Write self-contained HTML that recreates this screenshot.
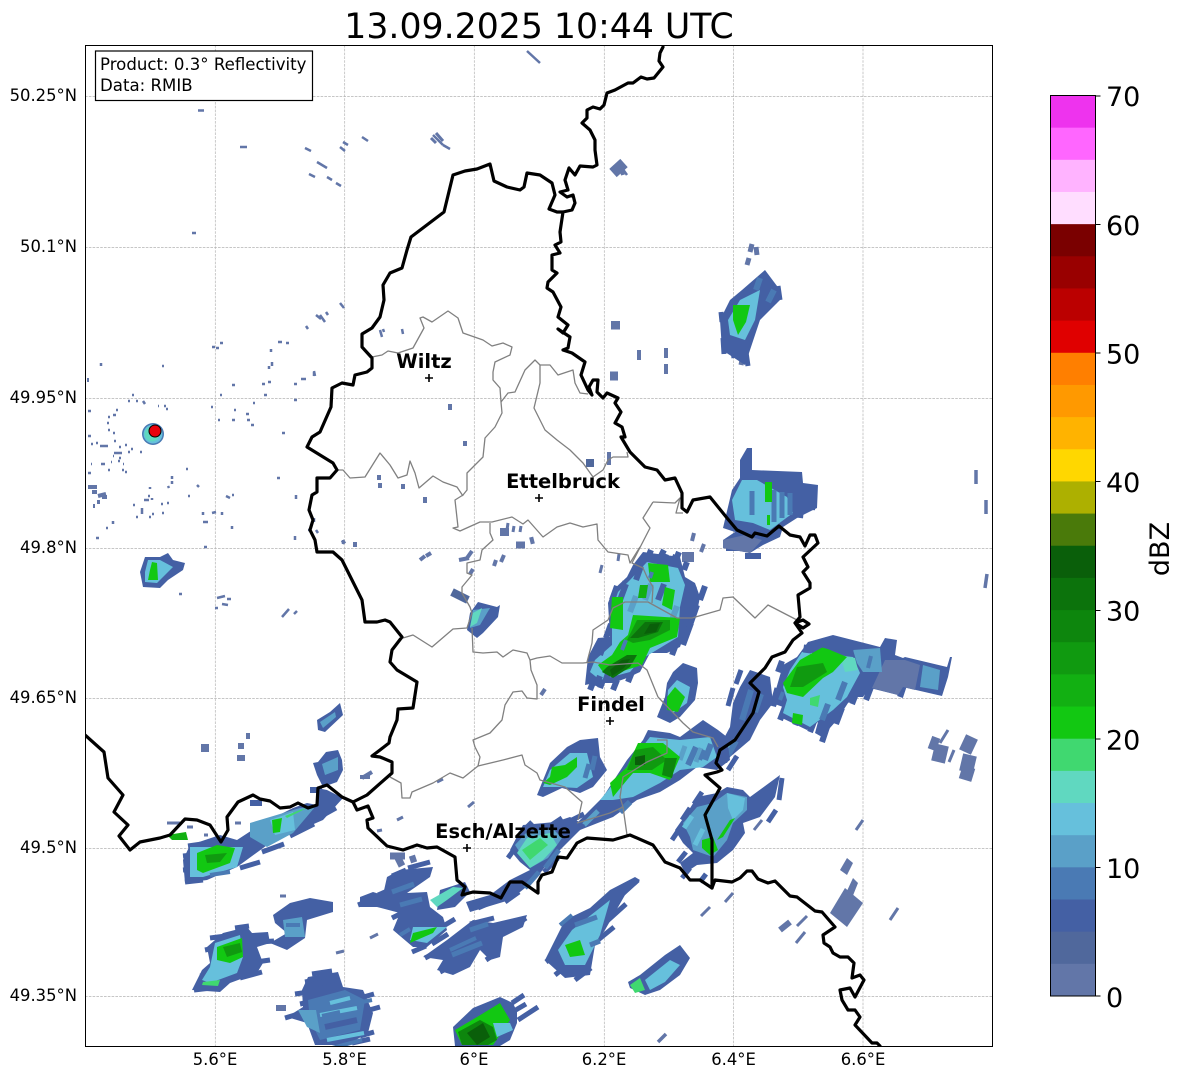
<!DOCTYPE html>
<html><head><meta charset="utf-8"><title>Radar</title>
<style>
html,body{margin:0;padding:0;background:#fff}
svg{display:block}
text{font-family:"DejaVu Sans",sans-serif;fill:#000}
.tk{font-size:16.4px}
.cb{font-size:27px}
.ct{font-size:19.5px;font-weight:bold;text-anchor:middle}
.c1{fill:#6276a8}.c2{fill:#50689c}.c3{fill:#4460a4}.c4{fill:#4a7ab4}.c5{fill:#5aa0c8}.c6{fill:#66c0dc}.c7{fill:#60d8c0}.c8{fill:#40d870}
.g1{fill:#12c812}.g2{fill:#12b012}.g3{fill:#109a10}.g4{fill:#0d860d}.g5{fill:#0c730c}.g6{fill:#0a5f0a}
.s1,.s2,.s3,.s4,.s5,.s6,.s7,.s8,.sg{fill:none}
.s1{stroke:#6276a8}.s2{stroke:#50689c}.s3{stroke:#4460a4}.s4{stroke:#4a7ab4}.s5{stroke:#5aa0c8}.s6{stroke:#66c0dc}.s7{stroke:#60d8c0}.s8{stroke:#40d870}.sg{stroke:#12c812}
</style></head><body>
<svg width="1184" height="1081" viewBox="0 0 1184 1081" xmlns="http://www.w3.org/2000/svg">
<defs><clipPath id="ax"><rect x="85" y="45" width="907" height="1001"/></clipPath></defs>
<rect width="1184" height="1081" fill="#fff"/>
<text x="539" y="38" text-anchor="middle" style="font-size:34.7px">13.09.2025 10:44 UTC</text>

<g stroke="#b4b4b4" stroke-width="0.7" stroke-dasharray="2.6 1.2" fill="none">
<path d="M215.3 45V1046M344.7 45V1046M474.3 45V1046M604.3 45V1046M733.6 45V1046M863 45V1046"/>
<path d="M85 96.5H992M85 247.5H992M85 398.5H992M85 548.5H992M85 698.5H992M85 848.5H992M85 996.5H992"/>
</g>

<g clip-path="url(#ax)">
<!-- small echoes -->
<g class="s1" stroke-width="2.500">
<path d="M198 110.500h6M240 147h7M305 148l6 3M317 162l10 6M309 174l6 3M327 177l5 3M336 183l5 3M340 147l5 4M343 142l5 3M362 137l6 4M192 233h4M433 135l10 10M380 330l2 7M383 329l1 3M402 329l1 5M340 303l4 5M316 315l5 4M320 315l5 7M326 312l2 3M306 326l2 3M314 371l1 5"/>
<path d="M527 51l13 12M443 145l7 4M622 168l5 7" stroke-width="2.500"/>
<path d="M436 133l7 8M431 138l5 5" stroke-width="3"/>
<path d="M212 347h3M216 348h3M220 343h3M271 349v3M272 362v4M269 366v3M278 342h4M286 343h3M101 363v3M162 366h2M314 372v4M301 379h5M294 384h3M268 382h3M262 384h3M232 385h3M132 395h2M128 401h2M136 401h2M143 401l2 3M220 395h2M264 395h3M294 400h3M253 403h2M211 407h2M158 406h1M164 406h2M166 409h2M234 410h2M246 414h3M247 420h3M251 425h3M232 420h3M218 420h2M116 410h2M113 415h3M108 417h2M107 423h2M88 411h3M282 433h3M88 436h3M108 430h2M113 433h2M119 447h2M125 445h2M131 449h2M128 452h2M114 441h2M96 443h2M91 444h2M100 446h8M114 453h8M119 458h2M118 461h2M113 456h1M140 452h2M91 464h1M101 464h2M103 464h2M111 462h1M108 470h2M123 464h1M122 470h2M125 472h2M88 473h3M186 469h2M172 476v3M172 481v3M168 486l1 2M197 485l2 2M277 478h3M296 495v4M188 496h2M232 495h2M226 496l4 2M150 487v2M144 500h5M148 496h2M152 498v2M133 505h2M142 508v6M152 514h2M149 517h2M136 517h2M162 513h2M161 504h2M167 503h2M203 512v3M212 513l4 -1M222 512v3M203 522h5M113 521v3M106 528h2M96 538h3M232 526v3M314 518v4M316 530l2 3M308 530h3M295 536v4M204 547h3M343 540v4M179 594h3M217 598l8 -2M227 599h4M222 604l6 1M215 608h3M282 617l7 -8M294 614l3 -3"/>
<path d="M88 487h9M92 492h5M98 496l8 -2M102 497h5M97 502h3M93 506h2M87 380h2" stroke-width="4"/>
</g>
<g class="s1" stroke-width="3">
<path d="M450 404v6M465 441v5M639 350v10M666 348v10M666 364v10M611 323h9" stroke-width="4"/>
<path d="M611 327h9" stroke-width="5"/>
<path d="M610 376h8" stroke-width="9"/>
<path d="M586 463h8" stroke-width="8" class="s2"/>
<path d="M609 452v13" stroke-width="4"/>
<path d="M379 475v5M380 483v5M403 484v5M425 497v6M342 543l3 -2M355 542v5M420 560l5 -4M426 556l5 -3"  stroke-width="4"/>
<path d="M459 560l10 -2M467 558l5 -7M470 574l3 -5M494 566l2 -6M501 562l3 -7" stroke-width="4"/>
<path d="M500 532h9" stroke-width="8"/>
<path d="M507 530l1 -7M513 532l1 -6M520 532l1 -6" stroke-width="3"/>
<path d="M516 545h9M530 541l4 -1" stroke-width="7"/>
<path d="M600 573l2 -8M618 561l1 -7M622 587l2 -6" stroke-width="3"/>
<path d="M452 592l16 8" stroke-width="8" class="s2"/>
<path d="M692 541l2 -8M701 552l3 -8" stroke-width="4"/>
<path d="M682 557l12 0" stroke-width="10"/>
<path d="M976 484v-14M986 514v-14M985 588l2 -14" stroke-width="3.500"/>
<path d="M856 830l7 -10M754 830l8 -10M725 902l8 -9M701 916l9 -9M890 920l8 -12" stroke-width="3"/>
<path d="M780 930l10 -8" stroke-width="6"/>
<path d="M797 926l10 -10M796 943l9 -11" stroke-width="3"/>
<path d="M201 748h8" stroke-width="8"/>
<path d="M238 746h6M237 758l8 0M246 736l4 0" stroke-width="6"/>
<path d="M541 695l4 -6M362 778l10 -6M360 777h10" stroke-width="4"/>
<path d="M397 820l6 -3M468 807l6 -5M437 782l6 -3M377 831l5 -1" stroke-width="3"/>
<path d="M390 856h15M398 858l4 8M410 860l6 -2" stroke-width="7"/>
<path d="M280 896h6M370 938l8 -4M336 953l8 -2" stroke-width="3"/>
<path d="M276 1008h10" stroke-width="6"/>
<path d="M658 1042l8 -8" stroke-width="3.500"/>
<path d="M750 252l2 -8M757 255l-1 -8M747 265l2 -7M741 365l1 -5" stroke-width="5"/>
<path d="M613 173l11 -10" stroke-width="11"/>
<path d="M623 175l-2 -7" stroke-width="4"/>
<path d="M938 762l4 -17M966 772l4 -17" stroke-width="14"/>
<path d="M930 742l8 3M972 737l-7 15M965 780l4 -13" stroke-width="13"/>
<path d="M948 730l-8 13M954 750l-5 12" stroke-width="3"/>
</g>

<!-- jagged under-edges -->
<path class="s3" stroke-width="6" d="M640 572l5 -14M650 566l3 -12M662 566l4 -12M672 566l4 -11M684 570l3 -8M692 612l6 -18M700 600l5 -14M606 638l5 -14M612 600l5 -14M596 662l4 -12M590 690l4 -10M600 688l3 -8M613 690l4 -10M628 682l4 -10M672 655l6 -16M684 636l4 -12"/>
<path class="s3" stroke-width="6" d="M795 725l5 -13M810 732l5 -13M822 742l6 -18M836 724l6 -16M852 704l5 -13M866 700l5 -13M900 697l4 -12M780 720l5 -13M773 706l5 -13M778 672l4 -11"/>
<path class="s3" stroke-width="5" d="M728 770l9 -14M722 756l8 -14M732 742l10 -14M744 726l8 -14M772 706l5 -18M728 706l5 -18M736 684l5 -14"/>
<path class="s3" stroke-width="5" d="M700 882l6 -8M682 878l8 -10M678 862l8 -10M672 840l8 -12M682 820l8 -12M694 804l8 -12M768 822l8 -12M779 800l3 -22M752 814l14 -12"/>
<path class="s3" stroke-width="5" d="M530 866l-10 -8M508 858l10 -14M520 834l12 -12M550 826l12 -8M572 820l12 -6M544 872l14 -14M505 902l14 -10M478 908l14 -6"/>
<path class="s3" stroke-width="5" d="M185 882l18 -2M183 870l14 -1M183 856l10 -1M188 846l14 -2M240 868l20 -6M262 852l22 -8M290 836l24 -12M318 818l18 -10"/>
<path class="s3" stroke-width="5" d="M194 990l26 -3M200 976l10 -1M262 972l-22 6M270 960l-14 2M205 950l10 -2M260 942l14 -1M210 938l16 -2M235 928l14 -2"/>
<path class="s3" stroke-width="5" d="M285 1018l20 -6M300 1004l14 -3M295 994l14 -2M305 982l22 -4M312 974l20 -3M360 998l14 -4M362 1012l18 -5M360 1036l14 -4M352 1043l18 -4"/>
<path class="s3" stroke-width="5" d="M512 1003l12 -8M514 1011l12 -7M518 1020l20 -13"/>
<path class="s3" stroke-width="5" d="M358 905l16 -6M378 895l14 -6M392 876l14 -6M408 868l22 -6M398 930l10 -6M392 918l12 -6M412 952l14 -6M432 944l16 -10M445 925l10 -6"/>
<path class="s3" stroke-width="5" d="M425 958l20 -10M440 972l22 -12M470 924l24 -6M502 934l24 -16M486 960l12 -8"/>
<path class="s3" stroke-width="5" d="M546 962l10 -8M555 975l10 -8M575 980l16 -12M592 945l22 -18M606 922l20 -18M618 898l20 -18"/>
<path class="s3" stroke-width="5" d="M724 354l-1 -16M734 358l-2 -14M748 366l-2 -14M774 304l-3 -22M780 300l-2 -14M722 322l-1 -10"/>
<path class="s3" stroke-width="6" d="M735 528l2 -24M744 500l2 -24M726 548l16 0M745 556l16 0M800 518l2 -18M812 510l2 -20"/>

<!-- radar-site echo -->
<circle cx="153" cy="434" r="11" fill="#4a7ab4"/>
<circle cx="153" cy="434" r="9.500" fill="#66c0dc"/>
<circle cx="152" cy="434" r="7.500" fill="#60d8c0"/>

<!-- S12 -->
<polygon class="c3" points="145,557 160,557 168,553 173,560 185,563 183,570 168,580 160,588 143,587 140,572"/>
<polygon class="c6" points="148,560 160,560 173,567 165,575 157,583 145,582 145,572"/>
<polygon class="g1" points="152,562 157,563 158,580 148,580 150,570"/>

<!-- S1 -->
<polygon class="c3" points="643,552 680,557 685,577 695,583 700,597 697,612 688,623 680,647 667,653 650,653 640,672 627,678 613,683 595,683 585,685 588,657 598,638 610,637 608,603 613,590 627,577 633,565"/>
<polygon class="c6" points="647,562 678,568 685,585 680,607 678,637 660,648 640,660 630,672 600,680 590,672 595,660 612,645 612,610 618,592 630,580"/>
<path class="s3" stroke-width="6" d="M683 645l8 -22M690 625l7 -20M686 608l8 -22M605 682l5 -14M600 655l5 -14M615 620l5 -14M620 600l6 -16M647 560l4 -10M660 558l4 -8M675 562l4 -10M658 600l6 -16M596 686l4 -10M636 580l5 -14"/>
<path class="s5" stroke-width="6" d="M630 612l6 -16M645 600l6 -16M618 660l4 -10M672 620l5 -14"/>
<polygon class="g1" points="648,563 668,565 670,582 650,582"/>
<polygon class="g1" points="665,587 675,590 672,610 662,605"/>
<polygon class="g1" points="612,597 623,597 623,630 610,628"/>
<polygon class="g2" points="640,585 648,585 646,598 638,598"/>
<polygon class="g1" points="633,615 680,618 677,637 650,648 642,665 620,672 603,672 598,665 612,655 620,642 628,635"/>
<polygon class="g3" points="637,620 670,620 670,630 650,640 633,643 627,640"/>
<polygon class="g5" points="645,622 663,622 658,632 638,638 630,638"/>
<polygon class="g6" points="650,624 660,623 656,632 644,634"/>
<polygon class="g5" points="607,667 627,655 637,655 630,667 613,678 602,672"/>
<polygon class="g6" points="610,670 622,660 630,659 624,668 612,676"/>

<!-- S3 -->
<polygon class="c3" points="750,670 770,677 773,703 760,720 750,740 730,757 727,763 717,760 723,740 730,727 733,703 740,687"/>
<path class="s4" stroke-width="6" d="M742 720l9 -30M728 755l8 -14M755 712l6 -18"/>
<path class="s6" stroke-width="5" d="M720 758l8 -14"/>

<!-- S2 -->
<polygon class="c3" points="808,642 833,635 880,647 885,638 897,640 895,655 903,658 905,657 947,667 950,657 952,657 948,677 942,696 903,687 898,695 870,688 863,697 857,697 848,703 837,720 822,737 815,733 818,722 807,730 782,718 783,707 772,703 783,665 797,657"/>
<polygon class="c1" points="885,660 905,660 920,665 915,690 903,687 898,695 872,688"/>
<polygon class="c5" points="853,650 880,648 882,672 863,672 857,663"/>
<polygon class="c5" points="923,665 940,670 938,690 920,687"/>
<polygon class="c6" points="802,652 853,657 860,673 847,697 833,710 810,727 783,713 787,700 783,687 790,670"/>
<polygon class="c7" points="840,655 855,658 858,670 845,672"/>
<polygon class="g1" points="800,660 823,647 847,657 833,672 823,678 803,697 787,693 783,683"/>
<polygon class="g3" points="797,667 823,663 827,672 803,687 790,687"/>
<polygon class="g1" points="793,713 803,715 802,725 792,723"/>
<polygon class="c8" points="810,698 820,695 818,707 810,705"/>
<path class="s4" stroke-width="6" d="M838 700l7 -18M822 720l6 -16"/>
<path class="s3" stroke-width="8" d="M808 645l-1 8M826 640l-2 8M850 645l-1 8"/>

<!-- S4 -->
<polygon class="c3" points="683,663 697,668 698,683 695,700 680,717 670,723 657,717 665,697 667,683 673,672"/>
<polygon class="c6" points="677,680 690,687 687,703 673,713 667,707 668,690"/>
<polygon class="g1" points="675,687 685,697 678,712 667,710 667,697"/>

<!-- S5 -->
<polygon class="c3" points="648,730 670,733 680,737 703,720 718,730 727,737 730,760 717,770 697,767 680,780 660,792 637,800 613,817 580,830 570,837 570,830 603,797 627,760 643,740"/>
<polygon class="c6" points="650,737 680,740 710,737 717,757 703,767 680,770 660,783 633,797 613,800 600,800 627,767 640,750"/>
<path class="s4" stroke-width="6" d="M688 765l8 -18M705 760l6 -16M620 812l10 -10"/>
<path class="s5" stroke-width="5" d="M680 760l5 -14M696 762l5 -14M584 825l14 -14"/>
<polygon class="g1" points="638,743 663,743 680,757 670,780 650,773 633,773 627,780 613,797 610,783 627,767"/>
<polygon class="g3" points="635,750 653,747 667,760 652,770 627,770"/>
<polygon class="g6" points="635,757 645,755 645,765 635,765"/>
<polygon class="g4" points="665,758 677,758 672,778 662,775"/>

<!-- S6 -->
<polygon class="c3" points="580,740 598,738 600,757 607,770 593,787 580,793 562,788 543,797 537,795 550,763 567,747"/>
<polygon class="c6" points="570,753 587,753 593,777 577,788 560,787 543,787 550,770"/>
<polygon class="g1" points="552,767 565,765 577,757 577,767 567,777 550,785 543,783 550,777"/>
<path class="s4" stroke-width="5" d="M592 770l3 -14M585 778l4 -14"/>

<!-- S7 -->
<polygon class="c3" points="727,787 743,790 750,797 780,775 775,797 760,817 743,823 745,833 733,850 717,863 697,865 685,873 680,863 693,853 683,843 675,830 687,813 697,797 717,793"/>
<polygon class="c5" points="727,793 747,797 747,810 733,823 727,840 713,857 693,850 690,837 683,823 697,807 713,803"/>
<polygon class="c6" points="727,793 745,798 743,810 733,820 728,808"/>
<path class="s6" stroke-width="5" d="M695 845l8 -16M684 828l8 -12"/>
<polygon class="g1" points="702,840 713,837 718,850 710,855 702,848"/>
<polygon class="g1" points="730,820 735,818 723,837 717,840"/>

<!-- S8 -->
<polygon class="c3" points="523,825 555,822 570,817 585,825 570,840 550,860 535,880 510,900 470,912 466,902 490,895 510,880 530,870 520,862 510,850"/>
<polygon class="c5" points="515,845 527,832 552,828 562,838 548,858 530,868"/>
<polygon class="c7" points="517,853 527,838 550,833 557,845 543,860 530,868"/>
<polygon class="c8" points="522,850 540,838 548,845 530,860"/>
<path class="s4" stroke-width="5" d="M545 868l14 -18M525 888l14 -16"/>

<!-- S9 -->
<polygon class="c3" points="765,270 780,290 780,300 760,320 750,350 745,365 722,350 720,320 730,300 742,290"/>
<polygon class="c6" points="740,300 760,290 755,320 745,340 730,335 728,320"/>
<polygon class="g1" points="733,305 750,305 746,322 738,335 733,320"/>
<path class="s4" stroke-width="6" d="M768 302l6 -12M756 290l4 -12"/>

<!-- S10 -->
<polygon class="c3" points="740,460 747,448 752,448 752,470 802,472 803,483 818,485 817,508 797,518 783,527 780,537 763,545 750,553 723,548 723,540 735,532 723,528 732,490 740,478"/>
<polygon class="c1" points="723,540 745,535 762,540 750,553 723,548"/>
<polygon class="c6" points="742,480 757,480 787,497 793,513 770,530 753,523 735,520 732,500"/>
<path class="s4" stroke-width="5" d="M774 522v-32M782 518v-26M790 515v-22M752 515v-24"/>
<polygon class="g1" points="765,482 772,482 772,502 765,502"/>
<polygon class="g1" points="767,515 770,515 770,525 767,525"/>

<!-- S11 -->
<polygon class="c3" points="478,602 497,607 500,605 498,617 483,633 477,638 467,630 470,613"/>
<polygon class="c5" points="473,610 490,608 480,625 470,628"/>
<polygon class="c7" points="473,613 482,608 477,623 470,627"/>

<!-- small S -->
<polygon class="c3" points="317,720 330,712 340,703 343,715 325,732 318,730"/>
<polygon class="c5" points="320,722 335,712 336,717 323,728"/>
<polygon class="c3" points="318,762 326,752 338,750 342,760 343,770 337,782 323,787 317,775 313,763"/>
<polygon class="c5" points="322,764 338,757 338,770 325,775"/>

<!-- S14 -->
<polygon class="c3" points="190,845 220,835 237,840 263,823 293,808 307,803 317,805 317,788 327,790 343,798 323,820 270,843 237,867 207,880 185,883 183,860"/>
<polygon class="c6" points="190,847 243,847 237,867 203,877 190,877"/>
<polygon class="c5" points="250,823 300,808 315,807 293,833 267,847 250,837"/>
<polygon class="c6" points="270,820 293,812 295,830 275,835"/>
<polygon class="g1" points="197,853 217,845 235,848 230,863 203,873 197,870"/>
<polygon class="g3" points="205,855 227,853 220,862 207,863"/>
<polygon class="g1" points="272,820 282,818 280,832 273,833"/>
<polygon class="c8" points="300,810 307,808 287,818 285,816"/>
<polygon class="g2" points="167,835 186,832 188,840 172,840"/>
<path class="s1" stroke-width="3" d="M167 823h13M187 827h6M204 835h4M235 823h6"/>
<path class="s3" stroke-width="6" d="M250 803h12M310 790h12"/>

<!-- S15 -->
<polygon class="c3" points="223,933 247,927 252,933 268,932 270,943 257,947 263,963 257,973 230,983 220,992 192,990 202,970 210,963 207,947"/>
<polygon class="c6" points="215,943 240,935 243,957 237,973 210,983 202,980 210,967"/>
<polygon class="g1" points="217,947 242,938 243,957 230,963 217,960"/>
<polygon class="g3" points="223,947 240,943 242,952 227,957"/>
<polygon class="c8" points="203,982 220,980 218,986 202,985"/>
<polygon class="c3" points="273,915 290,903 310,898 333,902 333,912 307,920 305,938 287,950 270,943 287,933 275,923"/>
<polygon class="c5" points="283,920 302,917 305,937 285,937"/>

<!-- S16 -->
<polygon class="c3" points="308,977 338,972 343,987 363,990 373,1013 368,1033 347,1045 315,1045 307,1023 287,1017 303,1007 302,990"/>
<polygon class="c4" points="308,1000 345,990 365,1000 360,1030 320,1040 310,1020"/>
<polygon class="c5" points="298,1010 316,1010 320,1033 307,1027"/>
<path class="s6" stroke-width="4" d="M320 1015l37 -7M327 1040l37 -7M330 1003l20 -5"/>
<path class="s3" stroke-width="6" d="M325 1027l32 -7M312 985l24 -6"/>

<!-- S17 -->
<polygon class="c3" points="453,1027 473,1008 500,997 513,1003 517,1012 517,1023 510,1040 500,1046 455,1046"/>
<polygon class="g1" points="455,1030 477,1017 500,1003 510,1020 493,1045 462,1045"/>
<polygon class="g4" points="458,1032 480,1020 493,1027 497,1040 488,1045 462,1045"/>
<polygon class="g6" points="467,1033 483,1023 490,1037 477,1045"/>
<polygon class="c6" points="493,1023 510,1023 513,1030 497,1037"/>

<!-- S18 -->
<polygon class="c3" points="360,897 373,892 383,895 387,877 400,870 433,867 430,877 407,893 427,892 430,907 443,917 447,930 427,947 413,947 393,930 400,913 377,907 360,907"/>
<path class="s4" stroke-width="5" d="M392 892l22 -8M400 905l22 -6"/>
<polygon class="c6" points="413,927 447,927 427,943 410,940"/>
<polygon class="g1" points="410,943 413,933 437,927 433,933"/>
<polygon class="c3" points="440,890 465,882 470,892 455,907 437,910"/>
<polygon class="c7" points="430,900 453,887 463,888 447,900 437,907"/>

<!-- S19 -->
<polygon class="c3" points="423,957 447,940 473,920 493,923 527,915 523,927 503,937 500,957 490,960 480,950 470,967 453,975 437,970 443,960"/>
<path class="s4" stroke-width="5" d="M452 955l30 -12M470 930l18 -6"/>

<!-- S20 -->
<polygon class="c3" points="640,880 625,895 605,930 595,945 590,975 565,978 545,960 555,940 565,920 590,908 610,890 635,877"/>
<polygon class="c6" points="610,900 600,935 585,965 565,965 558,950 572,930"/>
<polygon class="g1" points="565,945 580,940 585,955 570,957"/>
<path class="s4" stroke-width="5" d="M575 925l22 -8M590 945l10 -4"/>

<!-- S21 -->
<polygon class="c3" points="640,975 665,955 680,945 690,958 680,975 660,990 645,995 630,988 628,982"/>
<polygon class="c6" points="645,980 670,960 680,965 665,982 650,990"/>
<polygon class="c8" points="630,985 640,978 645,990 635,993"/>

<!-- S22 -->
<polygon class="c1" points="845,888 863,903 847,927 830,913"/>
<polygon class="c1" points="853,878 858,883 852,898 846,893"/>
<polygon class="c1" points="847,858 853,863 847,875 840,870"/>

<!-- interior texture -->
<path class="s4" stroke-width="4" d="M372 1000l-30 6M340 1012l-18 4M362 1040l-30 8"/>
<path class="s4" stroke-width="4" d="M650 578l2 -6M622 650l4 -10M780 700l3 -8M868 668l3 -12M700 760l4 -10M560 925l12 -10M400 935l10 -6M450 950l26 -12M300 925l-14 0M210 875l20 -3"/>
</g>

<!-- grey admin borders -->
<g clip-path="url(#ax)" fill="none" stroke="#808080" stroke-width="1.300" stroke-linejoin="round">
<path d="M372 357 382 355 388 351 398 353 413 348 424 328 420 318 423 317 432 322 448 311 458 318 463 333 483 340 492 346 503 343 512 347 510 355 495 362 493 372 493 380 500 388 501 402 502 413 495 427 485 438 483 457 467 473 467 490 463 495 455 500 458 527 453 528 460 531 480 522 492 522 512 517 523 524 528 520 543 537 557 527 570 523 583 527 597 524 598 540 608 552 628 555 630 563 640 547"/>
<path d="M501 402 508 393 515 392 525 370 535 360 540 365 550 365 558 375 573 370 575 383 580 393 588 394"/>
<path d="M540 365 540 383 534 408 545 430 557 440 570 450 583 463 593 477 603 470 608 460 613 457 628 457 627 452"/>
<path d="M337 470 343 470 350 478 365 477 380 453 390 465 398 478 407 475 410 461 415 473 419 488 433 476 443 482 457 487 463 496"/>
<path d="M490 523 490 533 493 540 482 550 480 560 467 563 467 573 472 575 462 587 462 593 470 607 472 613 467 628 453 629 432 647 413 635 403 638"/>
<path d="M472 628 473 652 483 653 497 652 503 657 513 650 527 653 530 660 537 658 550 656 562 663 583 663 593 662 610 665 638 663 647 670 658 697"/>
<path d="M530 660 531 670 537 685 537 699 527 698 522 691 513 692 505 705 502 720 490 733 473 740 475 747 480 757 478 766 503 760 522 755 525 765 537 773 540 780 565 787 582 802 578 820"/>
<path d="M478 766 463 778 450 773 433 783 412 792 410 798 402 798 401 783 390 777"/>
<path d="M587 662 592 643 593 630 608 620 613 608 625 602 648 602 677 618 692 618 720 610 723 598 733 597 755 618 768 605 797 620"/>
<path d="M653 502 643 518 650 528 632 563 643 568 647 577 653 587 652 603"/>
<path d="M653 502 675 503 680 498 676 513 683 513"/>
<path d="M627 835 623 807 620 797 623 777 647 762 667 753 667 740 657 740"/>
<path d="M658 697 683 723 693 732 713 738 718 747"/>
<path d="M623 807 610 813 577 823"/>
</g>

<!-- national border -->
<g clip-path="url(#ax)" fill="none" stroke="#000" stroke-width="3.200" stroke-linejoin="round" stroke-linecap="round">
<path d="M663 47 660 53 659 61 663 67 654 78 647 79 641 77 633 83 628 83 615 90 607 93 604 105 600 109 593 107 587 110 587 118 582 123 590 130 595 140 595 150 597 165 593 167 580 166 575 175 569 168 565 180 568 190 560 192 567 197 573 195 575 203 572 210 563 212 560 232 561 242 555 245 560 253 552 255 552 270 557 273 553 277 548 282 547 288 553 292 561 307 558 317 568 325 563 333 558 329 570 337 568 348 563 350 572 353 585 362 581 375 588 390 592 395 589 387 593 380 598 380 597 392 603 398 607 393 618 398 615 403 621 412 615 423 622 427 625 437 621 437 630 452 645 467 657 470 665 480 675 478 682 493 682 508 687 512 693 500 710 497 727 518 737 530 752 537 755 533 767 536 779 526 790 535 800 537 805 546 810 535 815 535 818 543 803 557 808 567 803 572 810 583 810 588 798 595 800 617 795 623 803 628 809 624 803 620 795 623 802 633 793 640 785 652 772 657 765 668 750 683 759 692 753 713 735 740 720 750 716 763 722 770 717 772 705 775 720 788 705 815 712 840 712 888"/>
<path d="M563 212 557 212 549 209 555 195 552 183 540 175 527 173 524 187 520 190 507 187 494 181 490 164 477 169 465 171 453 175 444 212 411 237 407 250 402 268 390 273 383 285 384 300 380 317 372 328 362 334 362 347 372 358 372 368 367 372 355 375 353 385 342 383 332 388 331 407 320 432 312 437 307 447 320 455 333 463 337 470 330 478 317 478 317 492 312 495 309 510 313 520 310 530 315 540 317 552 333 552 342 560 362 600 365 622 377 622 385 620 390 622 402 637 392 650 390 662 397 670 417 682 413 708 398 709 397 720 390 737 389 743 380 750 372 756 380 757 392 762 392 773 367 795 353 802 357 810 368 806 373 818 367 820 368 828 387 846 403 850 417 845 427 848 437 847 455 857 457 880 465 887 462 895 473 892 490 893 501 898 510 882 522 882 538 893 538 882 542 875 552 872 558 857 567 858 577 843 587 838 613 840 630 835 653 845 665 862 680 868 690 880 700 880 712 888 715 880 732 882 740 878 747 871 752 871 758 879 768 883 775 881 790 896 797 897 815 911 822 912 835 927 823 935 824 943 830 947 833 953 840 957 848 957 854 963 852 978 860 975 864 980 855 997 850 988 840 990 842 1000 848 1010 855 1010 860 1017 855 1025 872 1043 877 1043 880 1046"/>
<path d="M85 735 104 752 108 778 123 795 114 812 128 825 119 836 130 850 140 842 160 838 170 835 185 819 197 820 210 825 221 842 228 830 227 817 238 802 253 795 260 799 270 801 280 808 290 807 298 803 308 808 317 805 318 788 327 785 342 797 353 802"/>
</g>

<!-- radar marker -->
<circle cx="155" cy="431" r="6" fill="#e8000c" stroke="#000" stroke-width="1"/>

<!-- city markers -->
<g stroke="#000" stroke-width="1.600" fill="none">
<path d="M425 378h8M429 374v8M535 498h8M539 494v8M606 721h8M610 717v8M463 848h8M467 844v8"/>
</g>
<text class="ct" x="424" y="368">Wiltz</text>
<text class="ct" x="563" y="488">Ettelbruck</text>
<text class="ct" x="611" y="711">Findel</text>
<text class="ct" x="503" y="838">Esch/Alzette</text>

<!-- info box -->
<rect x="95.500" y="51" width="217" height="49.500" fill="#fff" stroke="#000" stroke-width="1.200"/>
<text x="100" y="70" style="font-size:16.600px">Product: 0.3° Reflectivity</text>
<text x="100" y="91" style="font-size:16.600px">Data: RMIB</text>

<!-- frame -->
<rect x="85.500" y="45.500" width="907" height="1001" fill="none" stroke="#000" stroke-width="1"/>

<!-- tick labels -->
<g class="tk" text-anchor="end">
<text x="77" y="101">50.25°N</text>
<text x="77" y="252">50.1°N</text>
<text x="77" y="403">49.95°N</text>
<text x="77" y="553">49.8°N</text>
<text x="77" y="703">49.65°N</text>
<text x="77" y="853">49.5°N</text>
<text x="77" y="1001">49.35°N</text>
</g>
<g class="tk" text-anchor="middle">
<text x="215" y="1065">5.6°E</text>
<text x="344.500" y="1065">5.8°E</text>
<text x="474" y="1065">6°E</text>
<text x="604" y="1065">6.2°E</text>
<text x="733.500" y="1065">6.4°E</text>
<text x="863" y="1065">6.6°E</text>
</g>

<!-- colorbar -->
<g>
<rect x="1050.500" y="95.500" width="45" height="32.700" fill="#ee33ee"/>
<rect x="1050.500" y="127.660" width="45" height="32.700" fill="#ff66ff"/>
<rect x="1050.500" y="159.820" width="45" height="32.700" fill="#ffb3ff"/>
<rect x="1050.500" y="191.980" width="45" height="32.700" fill="#ffddff"/>
<rect x="1050.500" y="224.140" width="45" height="32.700" fill="#7a0000"/>
<rect x="1050.500" y="256.300" width="45" height="32.700" fill="#990000"/>
<rect x="1050.500" y="288.460" width="45" height="32.700" fill="#bb0000"/>
<rect x="1050.500" y="320.620" width="45" height="32.700" fill="#e00000"/>
<rect x="1050.500" y="352.780" width="45" height="32.700" fill="#ff7f00"/>
<rect x="1050.500" y="384.940" width="45" height="32.700" fill="#ff9900"/>
<rect x="1050.500" y="417.100" width="45" height="32.700" fill="#ffb300"/>
<rect x="1050.500" y="449.260" width="45" height="32.700" fill="#ffd700"/>
<rect x="1050.500" y="481.420" width="45" height="32.700" fill="#adb000"/>
<rect x="1050.500" y="513.580" width="45" height="32.700" fill="#4a7a0a"/>
<rect x="1050.500" y="545.740" width="45" height="32.700" fill="#0a5f0a"/>
<rect x="1050.500" y="577.900" width="45" height="32.700" fill="#0c730c"/>
<rect x="1050.500" y="610.060" width="45" height="32.700" fill="#0d860d"/>
<rect x="1050.500" y="642.220" width="45" height="32.700" fill="#109a10"/>
<rect x="1050.500" y="674.380" width="45" height="32.700" fill="#12b012"/>
<rect x="1050.500" y="706.540" width="45" height="32.700" fill="#12c812"/>
<rect x="1050.500" y="738.700" width="45" height="32.700" fill="#40d870"/>
<rect x="1050.500" y="770.860" width="45" height="32.700" fill="#60d8c0"/>
<rect x="1050.500" y="803.020" width="45" height="32.700" fill="#66c0dc"/>
<rect x="1050.500" y="835.180" width="45" height="32.700" fill="#5aa0c8"/>
<rect x="1050.500" y="867.340" width="45" height="32.700" fill="#4a7ab4"/>
<rect x="1050.500" y="899.500" width="45" height="32.700" fill="#4460a4"/>
<rect x="1050.500" y="931.660" width="45" height="32.700" fill="#50689c"/>
<rect x="1050.500" y="963.820" width="45" height="32.180" fill="#6276a8"/>
<rect x="1050.500" y="95.500" width="45" height="900.500" fill="none" stroke="#000" stroke-width="1"/>
<path d="M1095.500 96H1100.500M1095.500 224.500H1100.500M1095.500 353H1100.500M1095.500 481.500H1100.500M1095.500 610.500H1100.500M1095.500 739H1100.500M1095.500 867.500H1100.500M1095.500 996H1100.500" stroke="#000" stroke-width="1" fill="none"/>
</g>
<g class="cb">
<text x="1106" y="106">70</text>
<text x="1106" y="235">60</text>
<text x="1106" y="363.500">50</text>
<text x="1106" y="492">40</text>
<text x="1106" y="620.500">30</text>
<text x="1106" y="749.500">20</text>
<text x="1106" y="878">10</text>
<text x="1106" y="1007">0</text>
</g>
<text class="cb" text-anchor="middle" transform="translate(1169 549) rotate(-90)">dBZ</text>
</svg>
</body></html>
